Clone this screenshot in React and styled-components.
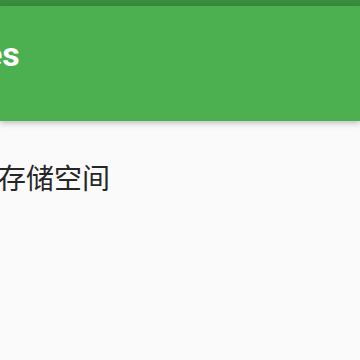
import React from "react";
import styled, { createGlobalStyle } from "styled-components";

const Global = createGlobalStyle`
  html, body { margin: 0; padding: 0; background: #fafafa; }
  body { font-family: Roboto, "Noto Sans CJK SC", sans-serif; overflow: hidden; }
`;

const Page = styled.div`
  width: 360px;
  height: 360px;
  background: #fafafa;
  overflow: hidden;
  display: flex;
  flex-direction: column;
`;

const StatusBar = styled.div`
  height: 6px;
  background: #388e3c;
  flex: none;
`;

const Toolbar = styled.header`
  height: 115px;
  background: #4caf50;
  box-shadow: 0 2px 6px rgba(0, 0, 0, 0.25);
  display: flex;
  align-items: flex-start;
  flex: none;
  position: relative;
  z-index: 1;
`;

const Title = styled.h1`
  margin: 28px 0 0 -16px;
  font-family: Roboto, sans-serif;
  font-weight: 700;
  font-size: 34px;
  line-height: 40px;
  color: #ffffff;
  white-space: nowrap;
`;

const Content = styled.main`
  flex: 1;
  display: flex;
  flex-direction: column;
  padding-top: 36px;
`;

const Item = styled.div`
  margin-left: -2px;
  font-family: "Noto Sans CJK SC", sans-serif;
  font-size: 28px;
  line-height: 40px;
  color: #262626;
  white-space: nowrap;
`;

export default function App() {
  return (
    <Page>
      <Global />
      <StatusBar />
      <Toolbar>
        <Title>es</Title>
      </Toolbar>
      <Content>
        <Item>存储空间</Item>
      </Content>
    </Page>
  );
}
